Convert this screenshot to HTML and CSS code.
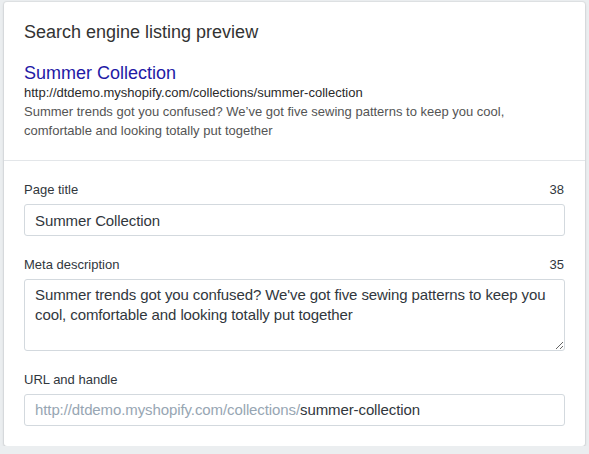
FILE: index.html
```html
<!DOCTYPE html>
<html lang="en">
<head>
<meta charset="utf-8">
<title>Search engine listing preview</title>
<link rel="stylesheet" href="styles.css">
</head>
<body>
<div class="card">
  <section class="preview">
    <h2 class="card-title">Search engine listing preview</h2>
    <div class="listing">
      <a class="listing-title" href="#">Summer Collection</a>
      <div class="listing-url">http://dtdemo.myshopify.com/collections/summer-collection</div>
      <div class="listing-desc">Summer trends got you confused? We’ve got five sewing patterns to keep you cool, comfortable and looking totally put together</div>
    </div>
  </section>
  <section class="form">
    <div class="field">
      <div class="field-label"><span>Page title</span><span class="count">38</span></div>
      <input class="text-input" type="text" value="Summer Collection">
    </div>
    <div class="field">
      <div class="field-label"><span>Meta description</span><span class="count">35</span></div>
      <textarea class="text-input textarea">Summer trends got you confused? We've got five sewing patterns to keep you cool, comfortable and looking totally put together</textarea>
    </div>
    <div class="field">
      <div class="field-label"><span>URL and handle</span></div>
      <div class="text-input url-input"><span class="prefix">http://dtdemo.myshopify.com/collections/</span><input class="handle" type="text" value="summer-collection"></div>
    </div>
  </section>
</div>
</body>
</html>
```
FILE: styles.css
```css
html, body {
  margin: 0;
  padding: 0;
}
body {
  background: #ebeef0;
  font-family: "Liberation Sans", Arial, sans-serif;
  color: #31373d;
  padding: 2px 4px 0 4px;
}
.card {
  background: #fff;
  border-radius: 3px;
  box-shadow: 0 0 0 1px rgba(63, 63, 68, 0.05), 0 1px 3px 0 rgba(63, 63, 68, 0.18);
  width: 581px;
}
.preview {
  padding: 20px 20px 20px 20px;
  border-bottom: 1px solid #e3e6e9;
}
.card-title {
  margin: 0;
  font-size: 18px;
  line-height: 20px;
  font-weight: normal;
  color: #333;
}
.listing {
  margin-top: 20px;
}
.listing-title {
  display: block;
  font-size: 18px;
  line-height: 22px;
  color: #1f1aa6;
  text-decoration: none;
}
.listing-url {
  font-size: 13px;
  line-height: 18px;
  color: #2a2a2a;
}
.listing-desc {
  font-size: 13px;
  line-height: 19px;
  color: #545454;
}
.form {
  padding: 20px;
  display: flex;
  flex-direction: column;
  gap: 20px;
}
.field {
  display: flex;
  flex-direction: column;
  gap: 5px;
}
.field-label {
  display: flex;
  justify-content: space-between;
  font-size: 13px;
  line-height: 18px;
  color: #31373d;
}
.count {
  padding-right: 1px;
}
.text-input {
  box-sizing: border-box;
  width: 100%;
  margin: 0;
  border: 1px solid #d3d9de;
  border-radius: 3px;
  padding: 5px 10px;
  font-family: "Liberation Sans", Arial, sans-serif;
  font-size: 15px;
  letter-spacing: -0.1px;
  line-height: 20px;
  height: 32px;
  color: #31373d;
  background: #fff;
  outline: none;
}
.textarea {
  height: 72px;
  display: block;
  resize: both;
}
.url-input {
  display: flex;
  align-items: center;
}
.prefix {
  color: #97a6b3;
  white-space: nowrap;
}
.handle {
  flex: 1;
  min-width: 0;
  border: 0;
  padding: 0;
  margin: 0;
  outline: none;
  font-family: inherit;
  font-size: inherit;
  letter-spacing: inherit;
  line-height: 20px;
  color: #31373d;
  background: transparent;
}
```
